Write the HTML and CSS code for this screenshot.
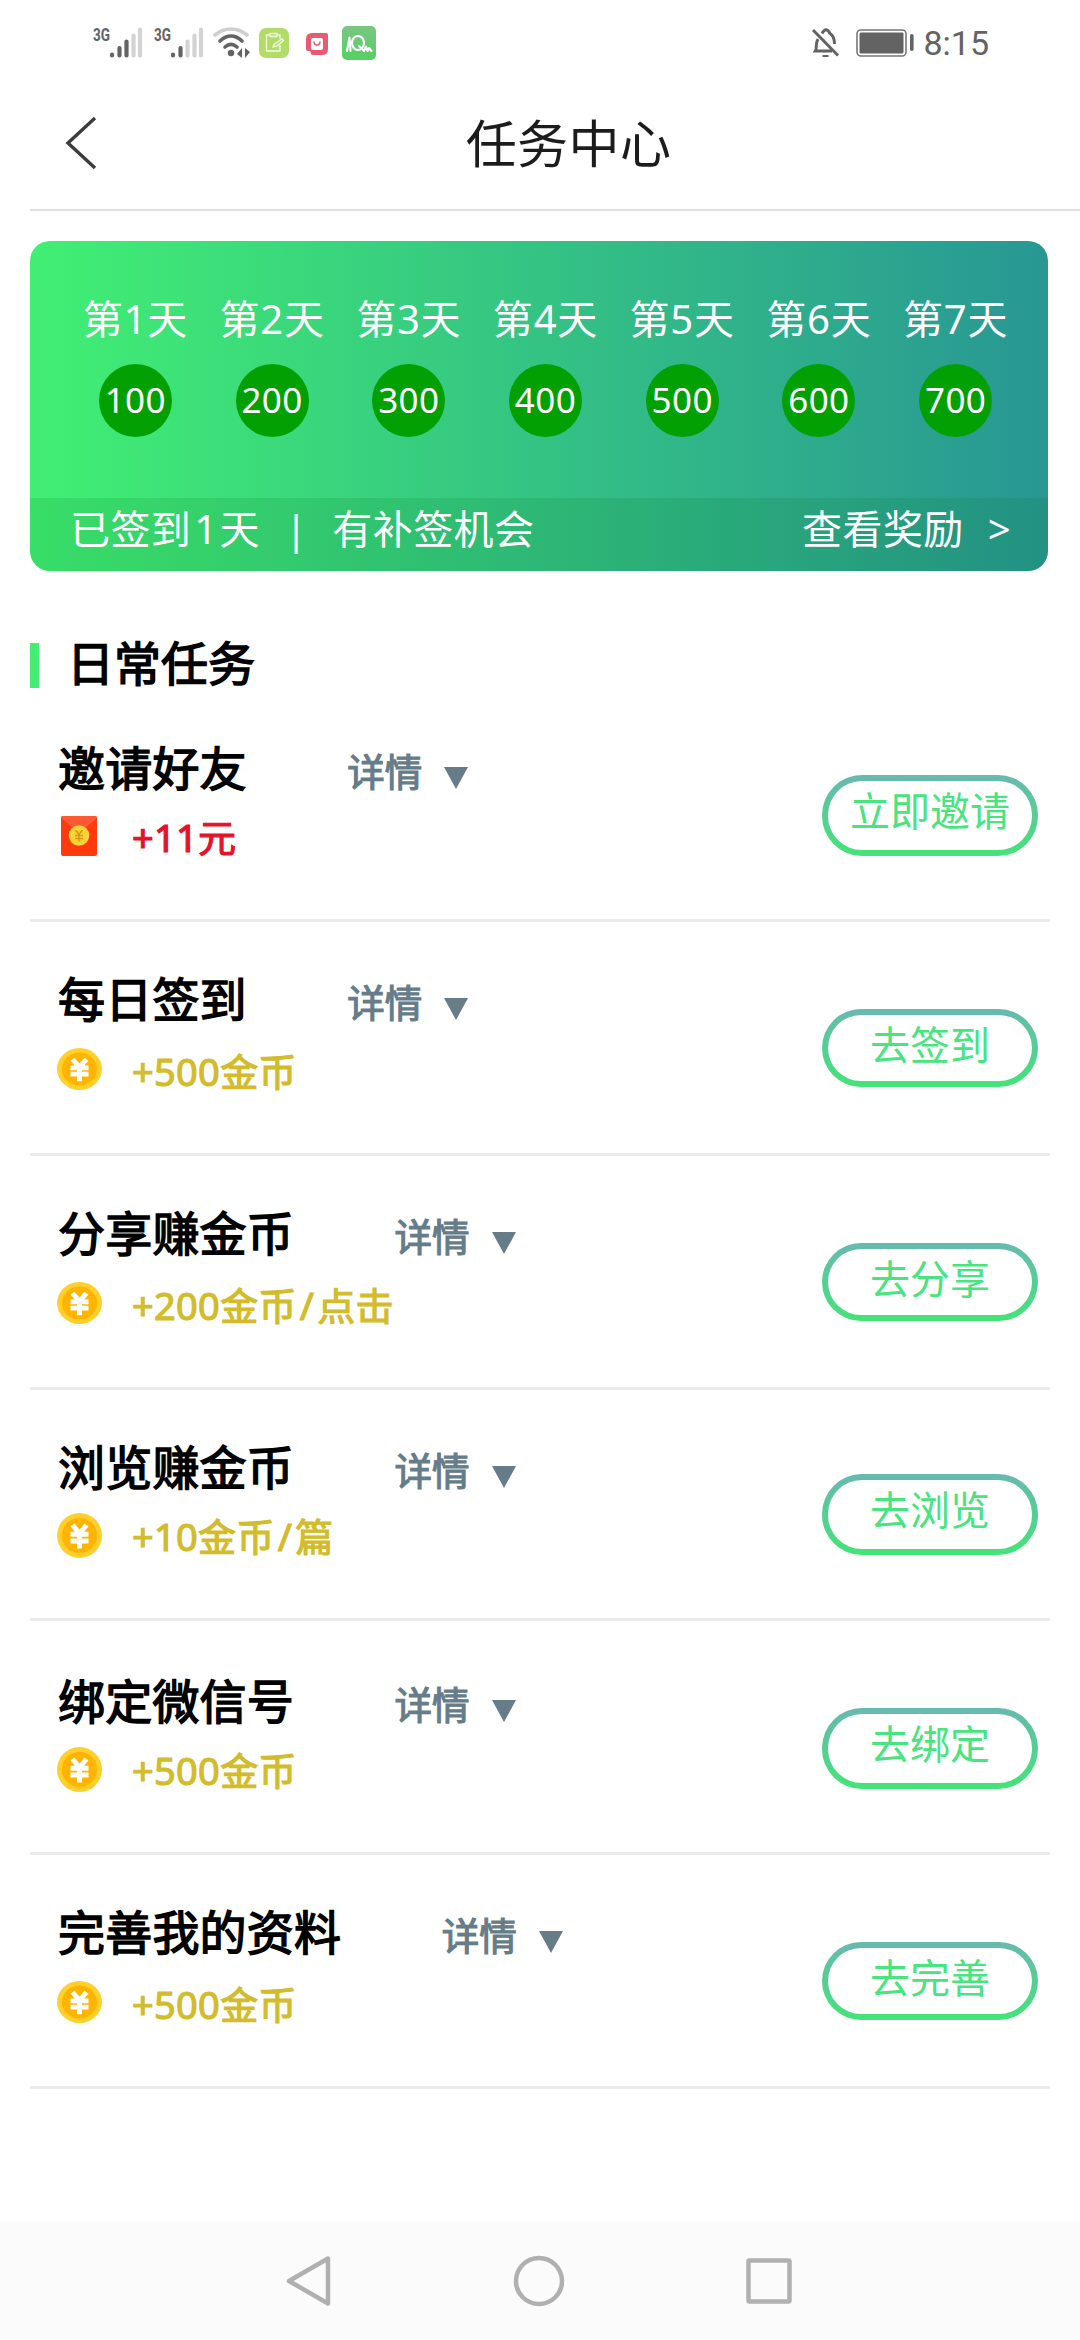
FILE: index.html
```html
<!DOCTYPE html>
<html lang="zh-CN">
<head>
<meta charset="utf-8">
<title>任务中心</title>
<link rel="stylesheet" href="styles.css">
</head>
<body>
<svg class="defs" width="0" height="0" aria-hidden="true">
  <symbol id="coin" viewBox="0 0 45 45" preserveAspectRatio="none">
    <circle cx="22.5" cy="22.5" r="22.5" fill="#ffd02b"/>
    <circle cx="22.5" cy="22.5" r="17.6" fill="#ffb400"/>
    <path d="M15.5 12 22.500 20.500 29.500 12M22.500 20V35.500M13.500 21.300H31.500M13.500 28H31.500" fill="none" stroke="#fff" stroke-width="5"/>
  </symbol>
  <symbol id="caret" viewBox="0 0 24 22"><path d="M0 0H24L12 22Z" fill="#667c89"/></symbol>
</svg>

<header class="status">
  <svg class="signal" width="52" height="34" viewBox="0 0 52 34">
    <text class="net" x="0" y="17" textLength="17" lengthAdjust="spacingAndGlyphs">3G</text>
    <g stroke-width="4.2" stroke-linecap="round" stroke="#636363"><path d="M19 30.5V31.5M26.500 24V31.500M33.500 17.500V31.500"/><path stroke="#d3d3d3" d="M40.500 11.500V31.500M47 5.500V31.500"/></g>
  </svg>
  <svg class="signal" width="52" height="34" viewBox="0 0 52 34">
    <text class="net" x="0" y="17" textLength="17" lengthAdjust="spacingAndGlyphs">3G</text>
    <g stroke-width="4.2" stroke-linecap="round" stroke="#636363"><path d="M19 30.5V31.5M26.500 24V31.500"/><path stroke="#d3d3d3" d="M33.500 17.500V31.500M40.500 11.500V31.500M47 5.500V31.500"/></g>
  </svg>
  <svg class="wifi" width="38" height="34" viewBox="0 0 38 34">
    <g fill="none" stroke-width="3.600" stroke-linecap="round"><path stroke="#cfcfcf" d="M2 11C12 3 24 3 34 11"/><path stroke="#636363" d="M7 17C14 10.500 22 10.500 29 17M12 23C16 19.500 20 19.500 24 23"/></g>
    <circle cx="18" cy="29" r="3.200" fill="#636363"/>
    <path d="M24 30 29 24V34M32 24V34L37 28Z" fill="#636363"/>
  </svg>
  <svg class="app-note" width="30" height="30" viewBox="0 0 30 30">
    <rect width="30" height="30" rx="7" fill="#b2dc68"/>
    <path d="M10 7H7.500V23H21V17M19 7H21V11M11 5.500H18V8.500H11ZM14 19 15.500 16 23 11 24.500 12.500 18 18Z" fill="none" stroke="#f3fadf" stroke-width="1.400" stroke-linejoin="round"/>
  </svg>
  <svg class="app-red" width="22" height="22" viewBox="0 0 22 22">
    <path d="M6 0H20Q22 0 22 2V16Q22 22 16 22H7Q4.500 22 4.500 18H2Q0 18 0 16V6Q0 0 6 0Z" fill="#e95a72"/>
    <rect x="5" y="5" width="12" height="12" rx="2" fill="#fff"/>
    <path d="M8 8.500Q8 12 11 12T14 8.500" fill="none" stroke="#e95a72" stroke-width="1.500"/>
  </svg>
  <svg class="app-green" width="34" height="34" viewBox="0 0 34 34">
    <defs><linearGradient id="leaf" x2="0" y2="1"><stop stop-color="#79c684"/><stop offset="1" stop-color="#55d062"/></linearGradient></defs>
    <rect width="34" height="34" rx="5" fill="url(#leaf)"/>
    <g fill="none" stroke="#fff" stroke-width="2.100" stroke-linecap="round" stroke-linejoin="round"><path d="M5 25 7.500 11.500 8.500 25"/><ellipse cx="16" cy="17" rx="6" ry="7"/><path d="M17 20 22 25 24 20.500 25.500 25 27 22 29.500 25"/></g>
  </svg>
  <div class="status-right">
    <svg width="30" height="32" viewBox="0 0 30 32">
      <g fill="none" stroke="#636363" stroke-width="3"><path d="M2 3 27 28.500M7 12C4 17 6 22 4.500 24H21M11 6.500Q15-1 19 6.500C23 9 23.500 14 23.500 17"/><path d="M11.500 29H17.500" stroke-width="2"/></g>
    </svg>
    <svg class="battery" width="58" height="28" viewBox="0 0 58 28">
      <rect x="1" y="1" width="49" height="26" rx="4" fill="none" stroke="#777" stroke-width="1.600"/>
      <rect x="3.500" y="3.500" width="44" height="21" rx="1.500" fill="#636363"/><rect x="54" y="5" width="3.600" height="17" rx="1.800" fill="#636363"/>
    </svg>
    <span class="clock">8:15</span>
  </div>
</header>

<nav class="titlebar">
  <svg class="back" width="34" height="54" viewBox="0 0 34 54"><path d="M30 2 3 27 30 52" fill="none" stroke="#3c3c3c" stroke-width="3.400"/></svg>
  <h1>任务中心</h1>
</nav>

<main>
  <section class="checkin">
    <div class="days">
      <div class="day">第1天<span>100</span></div>
      <div class="day">第2天<span>200</span></div>
      <div class="day">第3天<span>300</span></div>
      <div class="day">第4天<span>400</span></div>
      <div class="day">第5天<span>500</span></div>
      <div class="day">第6天<span>600</span></div>
      <div class="day">第7天<span>700</span></div>
    </div>
    <div class="summary">
      <span>已签到<span class="count">1</span>天</span><span class="bar">|</span><span>有补签机会</span>
      <span class="rewards">查看奖励</span><span class="more">&gt;</span>
    </div>
  </section>

  <h2>日常任务</h2>

  <section class="tasks">
    <article class="task first">
      <div class="info">
        <div class="head"><h3>邀请好友</h3><span class="detail">详情</span><svg class="caret"><use href="#caret"/></svg></div>
        <div class="reward cash">
          <svg class="packet" width="36" height="40" viewBox="0 0 36 40"><rect width="36" height="40" rx="2" fill="#ff3a0c"/><path d="M1 0H35L36 2 18 17 0 2Z" fill="#ff5933"/><circle cx="18" cy="19.500" r="10.300" fill="#fad334"/><path d="M14.500 14 18 18.500 21.500 14M18 18V25.500M14 19.500H22M14 22.500H22" fill="none" stroke="#d99518" stroke-width="1.500"/></svg>
          <span class="amount">+11元</span></div>
      </div>
      <button>立即邀请</button>
    </article>
    <article class="task tight">
      <div class="info">
        <div class="head"><h3>每日签到</h3><span class="detail">详情</span><svg class="caret"><use href="#caret"/></svg></div>
        <div class="reward"><svg class="coin"><use href="#coin"/></svg><span class="amount">+500金币</span></div>
      </div>
      <button>去签到</button>
    </article>
    <article class="task tight">
      <div class="info">
        <div class="head"><h3>分享赚金币</h3><span class="detail">详情</span><svg class="caret"><use href="#caret"/></svg></div>
        <div class="reward"><svg class="coin"><use href="#coin"/></svg><span class="amount">+200金币<span class="per">/</span>点击</span></div>
      </div>
      <button>去分享</button>
    </article>
    <article class="task short">
      <div class="info">
        <div class="head"><h3>浏览赚金币</h3><span class="detail">详情</span><svg class="caret"><use href="#caret"/></svg></div>
        <div class="reward"><svg class="coin"><use href="#coin"/></svg><span class="amount">+10金币<span class="per">/</span>篇</span></div>
      </div>
      <button>去浏览</button>
    </article>
    <article class="task">
      <div class="info">
        <div class="head"><h3>绑定微信号</h3><span class="detail">详情</span><svg class="caret"><use href="#caret"/></svg></div>
        <div class="reward"><svg class="coin"><use href="#coin"/></svg><span class="amount">+500金币</span></div>
      </div>
      <button>去绑定</button>
    </article>
    <article class="task tight">
      <div class="info">
        <div class="head"><h3>完善我的资料</h3><span class="detail">详情</span><svg class="caret"><use href="#caret"/></svg></div>
        <div class="reward"><svg class="coin"><use href="#coin"/></svg><span class="amount">+500金币</span></div>
      </div>
      <button>去完善</button>
    </article>
  </section>
</main>

<footer class="sysnav">
  <svg width="52" height="52" viewBox="0 0 52 52"><path d="M45 3.500V48.500L6 26Z"/></svg>
  <svg width="52" height="52" viewBox="0 0 52 52"><circle cx="26" cy="26" r="23"/></svg>
  <svg width="52" height="52" viewBox="0 0 52 52"><rect x="5.500" y="5.500" width="41" height="41" rx="1"/></svg>
</footer>
</body>
</html>
```

FILE: styles.css
```css
* { box-sizing: border-box; }

body {
  display: flex;
  flex-direction: column;
  width: 1080px;
  height: 2340px;
  margin: 0;
  overflow: hidden;
  background: #fff;
  font-family: "Noto Sans", "Noto Sans CJK SC", sans-serif;
}

svg { display: block; flex: none; }
.defs { position: absolute; }
h1, h2, h3 { margin: 0; font-weight: 400; }

/* system status bar */
.status {
  display: flex;
  align-items: flex-start;
  height: 80px;
  padding: 24px 91px 0 93px;
}
.signal { margin-right: 9px; }
.net { font: 700 19px Roboto, sans-serif; fill: #636363; }
.wifi { margin-left: -2px; }
.app-note { margin: 4px 0 0 8px; }
.app-red { margin: 9px 0 0 17px; }
.app-green { margin: 2px 0 0 14px; }
.status-right { display: flex; align-items: flex-start; margin-left: auto; padding-top: 3px; }
.battery { margin: 2px 0 0 15px; }
.clock {
  margin: -4px 0 0 9px;
  color: #636363;
  font: 400 34px/40px Roboto, sans-serif;
}

/* page title */
.titlebar {
  display: flex;
  align-items: center;
  height: 131px;
  margin-left: 30px;
  padding: 0 0 4px 35px;
  border-bottom: 2px solid #e0e0e0;
}
.titlebar h1 {
  flex: 1;
  padding-right: 42px;
  color: #1c1c1c;
  font-size: 51px;
  line-height: 60px;
  letter-spacing: 0.4px;
  text-align: center;
}

/* sign-in card */
.checkin {
  display: flex;
  flex-direction: column;
  justify-content: space-between;
  width: 1018px;
  height: 330px;
  margin: 30px 0 0 30px;
  border-radius: 20px;
  overflow: hidden;
  color: #fff;
  background: linear-gradient(90deg, #41ef73, #289794);
}
.days {
  display: grid;
  grid-template-columns: repeat(7, 1fr);
  padding: 52px 24px 0 37px;
}
.day {
  display: flex;
  flex-direction: column;
  align-items: center;
  font-size: 40px;
  line-height: 52px;
  letter-spacing: 0.8px;
}
.day span {
  width: 73px;
  height: 73px;
  margin-top: 19px;
  border-radius: 50%;
  background: #02a002;
  font-size: 35px;
  line-height: 71px;
  letter-spacing: 0.4px;
  text-align: center;
}
.summary {
  display: flex;
  height: 73px;
  padding: 0 37px 0 40px;
  background: rgba(0, 110, 20, 0.13);
  font-size: 40px;
  line-height: 62px;
  letter-spacing: 0.4px;
}
.summary .count { margin: 0 2px 0 3px; }
.summary .bar { margin: 0 25px; }
.summary .rewards { margin-left: auto; }
.summary .more { margin-left: 24px; }

/* section heading */
h2 {
  display: flex;
  align-items: flex-start;
  height: 46px;
  margin: 70px 0 2px 30px;
  font-size: 47px;
  line-height: 45px;
  -webkit-text-stroke: 1.500px;
}
h2::before {
  content: "";
  width: 9px;
  height: 45px;
  margin: 2px 28px 0 0;
  background: #43ec72;
}

/* task list */
.tasks { width: 1020px; margin-left: 30px; }
.task {
  display: flex;
  justify-content: space-between;
  height: 234px;
  padding: 50px 12px 0 28px;
  border-bottom: 3px solid #ebebeb;
}
.task.first { height: 233px; padding-top: 49px; }
.task.short { height: 231px; padding-top: 47px; }
.head { display: flex; height: 76px; line-height: 60px; }
.head h3 { font-size: 47px; letter-spacing: 0.2px; -webkit-text-stroke: 1.500px; }
.detail {
  margin-left: 100.500px;
  color: #667c89;
  font-size: 37.500px;
  line-height: 68px;
  -webkit-text-stroke: 1.200px;
}
.caret { width: 24px; height: 22px; margin: 29px 0 0 22px; }
.reward {
  display: flex;
  margin-left: -1px;
  color: #d2bc2b;
  font-size: 38px;
  line-height: 47px;
  letter-spacing: 0.300px;
  -webkit-text-stroke: 1.200px;
}
.amount { margin-left: 30px; }
.per { margin: 0 3px; }
.coin { width: 45px; height: 45px; }
.packet { margin: 2px 5px 0 4px; }
.cash { color: #e4122b; }
.task button {
  width: 216px;
  height: 81px;
  margin: 37px 0 0;
  padding: 0 0 9px;
  border: 6px solid transparent;
  border-radius: 40px;
  background: linear-gradient(#fff, #fff) padding-box, linear-gradient(#67b9b0, #43e477) border-box;
  color: #47e480;
  font: 400 40px/60px "Noto Sans", "Noto Sans CJK SC", sans-serif;
}
.tight .head { height: 79px; }
.task.tight { padding-top: 47px; }
.task.tight button { height: 78px; margin-top: 40px; padding-bottom: 6px; }
.tight .coin { height: 42px; }

/* system navigation bar */
.sysnav {
  display: flex;
  justify-content: space-between;
  height: 118px;
  margin-top: auto;
  padding: 33px 285px 0 283px;
  background: #fbfbfb;
}
.sysnav svg { fill: none; stroke: #b0b0b0; stroke-width: 4.500px; stroke-linejoin: round; }
```
